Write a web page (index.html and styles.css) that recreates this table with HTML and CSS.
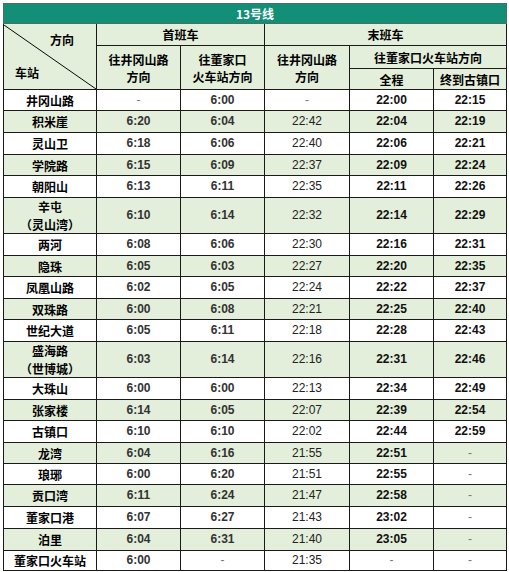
FILE: index.html
```html
<!DOCTYPE html>
<html lang="zh-CN">
<head>
<meta charset="utf-8">
<title>13号线</title>
<link rel="stylesheet" href="styles.css">
</head>
<body>
<table class="tt">
  <colgroup>
    <col class="c1"><col class="c2"><col class="c3"><col class="c4"><col class="c5"><col class="c6">
  </colgroup>
  <thead>
    <tr class="title"><th colspan="6">13号线</th></tr>
    <tr class="h1">
      <th rowspan="3" class="diag">
        <div class="diag-box">
          <svg class="diag-line" viewBox="0 0 93 66" preserveAspectRatio="none"><line x1="0" y1="0" x2="93" y2="66" stroke="#000" stroke-width="1"/></svg>
          <span class="lbl-dir">方向</span>
          <span class="lbl-st">车站</span>
        </div>
      </th>
      <th colspan="2">首班车</th>
      <th colspan="3">末班车</th>
    </tr>
    <tr class="h2">
      <th rowspan="2">往井冈山路<br>方向</th>
      <th rowspan="2">往董家口<br>火车站方向</th>
      <th rowspan="2">往井冈山路<br>方向</th>
      <th colspan="2">往董家口火车站方向</th>
    </tr>
    <tr class="h3">
      <th>全程</th>
      <th>终到古镇口</th>
    </tr>
  </thead>
  <tbody>
    <tr class="w r21"><td class="st">井冈山路</td><td class="f dash">-</td><td class="f">6:00</td><td class="l dash">-</td><td class="b">22:00</td><td class="b">22:15</td></tr>
    <tr class="g r22"><td class="st">积米崖</td><td class="f">6:20</td><td class="f">6:04</td><td class="l">22:42</td><td class="b">22:04</td><td class="b">22:19</td></tr>
    <tr class="w r22"><td class="st">灵山卫</td><td class="f">6:18</td><td class="f">6:06</td><td class="l">22:40</td><td class="b">22:06</td><td class="b">22:21</td></tr>
    <tr class="g r21"><td class="st">学院路</td><td class="f">6:15</td><td class="f">6:09</td><td class="l">22:37</td><td class="b">22:09</td><td class="b">22:24</td></tr>
    <tr class="w r22"><td class="st">朝阳山</td><td class="f">6:13</td><td class="f">6:11</td><td class="l">22:35</td><td class="b">22:11</td><td class="b">22:26</td></tr>
    <tr class="g r36"><td class="st two">辛屯<br>（灵山湾）</td><td class="f">6:10</td><td class="f">6:14</td><td class="l">22:32</td><td class="b">22:14</td><td class="b">22:29</td></tr>
    <tr class="w r22"><td class="st">两河</td><td class="f">6:08</td><td class="f">6:06</td><td class="l">22:30</td><td class="b">22:16</td><td class="b">22:31</td></tr>
    <tr class="g r21"><td class="st">隐珠</td><td class="f">6:05</td><td class="f">6:03</td><td class="l">22:27</td><td class="b">22:20</td><td class="b">22:35</td></tr>
    <tr class="w r22"><td class="st">凤凰山路</td><td class="f">6:02</td><td class="f">6:05</td><td class="l">22:24</td><td class="b">22:22</td><td class="b">22:37</td></tr>
    <tr class="g r21"><td class="st">双珠路</td><td class="f">6:00</td><td class="f">6:08</td><td class="l">22:21</td><td class="b">22:25</td><td class="b">22:40</td></tr>
    <tr class="w r22"><td class="st">世纪大道</td><td class="f">6:05</td><td class="f">6:11</td><td class="l">22:18</td><td class="b">22:28</td><td class="b">22:43</td></tr>
    <tr class="g r36"><td class="st two">盛海路<br>（世博城）</td><td class="f">6:03</td><td class="f">6:14</td><td class="l">22:16</td><td class="b">22:31</td><td class="b">22:46</td></tr>
    <tr class="w r22"><td class="st">大珠山</td><td class="f">6:00</td><td class="f">6:00</td><td class="l">22:13</td><td class="b">22:34</td><td class="b">22:49</td></tr>
    <tr class="g r21"><td class="st">张家楼</td><td class="f">6:14</td><td class="f">6:05</td><td class="l">22:07</td><td class="b">22:39</td><td class="b">22:54</td></tr>
    <tr class="w r22"><td class="st">古镇口</td><td class="f">6:10</td><td class="f">6:10</td><td class="l">22:02</td><td class="b">22:44</td><td class="b">22:59</td></tr>
    <tr class="g r21"><td class="st">龙湾</td><td class="f">6:04</td><td class="f">6:16</td><td class="l">21:55</td><td class="b">22:51</td><td class="b dash">-</td></tr>
    <tr class="w r21"><td class="st">琅琊</td><td class="f">6:00</td><td class="f">6:20</td><td class="l">21:51</td><td class="b">22:55</td><td class="b dash">-</td></tr>
    <tr class="g r22"><td class="st">贡口湾</td><td class="f">6:11</td><td class="f">6:24</td><td class="l">21:47</td><td class="b">22:58</td><td class="b dash">-</td></tr>
    <tr class="w r22"><td class="st">董家口港</td><td class="f">6:07</td><td class="f">6:27</td><td class="l">21:43</td><td class="b">23:02</td><td class="b dash">-</td></tr>
    <tr class="g r22"><td class="st">泊里</td><td class="f">6:04</td><td class="f">6:31</td><td class="l">21:40</td><td class="b">23:05</td><td class="b dash">-</td></tr>
    <tr class="w r20"><td class="st">董家口火车站</td><td class="f">6:00</td><td class="f dash">-</td><td class="l">21:35</td><td class="b dash">-</td><td class="b dash">-</td></tr>
  </tbody>
</table>
</body>
</html>
```

FILE: styles.css
```css
html, body {
  margin: 0;
  padding: 0;
  background: #ffffff;
}
body {
  padding: 3px;
}
.tt {
  border-collapse: collapse;
  table-layout: fixed;
  width: 504px;
  font-family: "Liberation Sans", "Noto Sans CJK SC", sans-serif;
  font-size: 12px;
  color: #000;
}
.c1 { width: 93px; }
.c2 { width: 84px; }
.c3 { width: 84px; }
.c4 { width: 85px; }
.c5 { width: 84px; }
.c6 { width: 73px; }

.tt th, .tt td {
  border: 1px solid #1a1a1a;
  padding: 0;
  text-align: center;
  vertical-align: middle;
  line-height: 15px;
}
.tt th {
  font-family: "Noto Sans CJK SC", sans-serif;
  font-weight: 700;
  font-size: 12px;
  line-height: 17px;
  background: #e3efda;
}
.title th {
  background: #148f77;
  color: #ffffff;
  height: 19px;
  font-size: 12px;
  line-height: 15px;
  border-color: #4a6f63;
}
.h1 { height: 22px; }
.h2 { height: 23px; }
.h3 { height: 21px; }

.diag {
  position: relative;
}
.diag-box {
  position: relative;
  height: 64px;
  display: flex;
  flex-direction: column;
  justify-content: space-between;
  padding: 6px 0 8px 0;
  box-sizing: border-box;
}
.diag-line {
  position: absolute;
  left: 0;
  top: 0;
  width: 100%;
  height: 100%;
}
.lbl-dir {
  align-self: flex-end;
  margin-right: 22px;
  line-height: 17px;
}
.lbl-st {
  align-self: flex-start;
  margin-left: 11px;
  line-height: 17px;
}

.w td { background: #ffffff; }
.g td { background: #e3efda; }

.r20 { height: 20px; }
.r21 { height: 21px; }
.r22 { height: 22px; }
.r36 { height: 36px; }

.st {
  font-family: "Noto Sans CJK SC", sans-serif;
  font-weight: 700;
  font-size: 12px;
}
.st.two {
  line-height: 17.5px;
}
.f {
  font-weight: 700;
  color: #333333;
}
.l {
  font-weight: 400;
  color: #222222;
}
.b {
  font-weight: 700;
  color: #111111;
}
.dash {
  color: #777777;
  font-weight: 400;
}
```
